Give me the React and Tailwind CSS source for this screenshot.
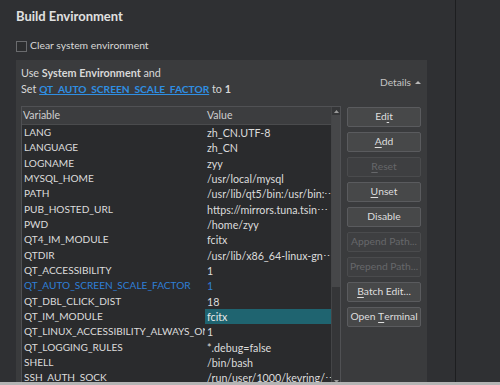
import React from "react";

const rows = [
  ["LANG", "zh_CN.UTF-8"],
  ["LANGUAGE", "zh_CN"],
  ["LOGNAME", "zyy"],
  ["MYSQL_HOME", "/usr/local/mysql"],
  ["PATH", "/usr/lib/qt5/bin:/usr/bin:\u22EF"],
  ["PUB_HOSTED_URL", "https://mirrors.tuna.tsin\u22EF"],
  ["PWD", "/home/zyy"],
  ["QT4_IM_MODULE", "fcitx"],
  ["QTDIR", "/usr/lib/x86_64-linux-gn\u22EF"],
  ["QT_ACCESSIBILITY", "1"],
  ["QT_AUTO_SCREEN_SCALE_FACTOR", "1", "changed"],
  ["QT_DBL_CLICK_DIST", "18"],
  ["QT_IM_MODULE", "fcitx", "selected"],
  ["QT_LINUX_ACCESSIBILITY_ALWAYS_ON", "1"],
  ["QT_LOGGING_RULES", "*.debug=false"],
  ["SHELL", "/bin/bash"],
  ["SSH_AUTH_SOCK", "/run/user/1000/keyring/\u22EF"],
];

const buttons = [
  { pre: "Ed", key: "i", post: "t" },
  { pre: "", key: "A", post: "dd" },
  { pre: "", key: "R", post: "eset", disabled: true },
  { pre: "", key: "U", post: "nset" },
  { pre: "Disable", key: "", post: "" },
  { pre: "Append Path...", key: "", post: "", disabled: true },
  { pre: "Prepend Path...", key: "", post: "", disabled: true },
  { pre: "", key: "B", post: "atch Edit..." },
  { pre: "Open ", key: "T", post: "erminal" },
];

const EnvButton = ({ pre, keyChar, post, disabled }) => (
  <div
    className={`flex h-[20px] items-center justify-center overflow-hidden whitespace-pre rounded-[2px] border text-[10.3px] ${
      disabled
        ? "border-[#4a4b4d] bg-[#3e3f41] text-[#66676a]"
        : "border-[#5a5b5e] bg-[#474849] text-[#dedede]"
    }`}
  >
    {pre}
    {keyChar && <span className="underline underline-offset-2">{keyChar}</span>}
    {post}
  </div>
);

const App = () => {
  return (
    <div
      className="flex h-[385px] w-[500px] flex-col overflow-hidden bg-[#2f3033] text-[#dcdcdc]"
      style={{ fontFamily: 'Lato, "Noto Sans", sans-serif' }}
    >
      <div className="flex h-[382px]">
        <div className="w-[455px] pl-4 pt-[6px]">
          <h1 className="h-[20px] text-[13px] font-bold leading-[20px] text-[#e0e0e0]">
            Build Environment
          </h1>
          <label className="mt-[13px] flex h-[14px] items-center gap-[3px] text-[10.4px] text-[#d8d8d8]">
            <span className="block h-[11px] w-[11px] border border-[#6a6b6e] bg-[#2c2d2f]" />
            Clear system environment
          </label>
          <div className="mt-[7px] h-[330px] w-[411px] bg-[#3a3b3d] pl-[5px] pr-[6px] pt-[5px]">
            <div className="flex items-end justify-between">
              <div className="text-[10.8px] leading-[16px] text-[#d8d8d8]">
                <div>
                  Use <span className="font-bold">System Environment</span> and
                </div>
                <div>
                  Set{" "}
                  <span className="text-[10.2px] font-bold text-[#2f8fe3] underline">
                    QT_AUTO_SCREEN_SCALE_FACTOR
                  </span>{" "}
                  to <span className="font-bold">1</span>
                </div>
              </div>
              <div className="mb-[7px] flex items-center gap-[4px] text-[10.2px] text-[#c4c4c4]">
                Details
                <svg width="6" height="4" viewBox="0 0 6 4">
                  <path d="M0 4 L3 1 L6 4 Z" fill="#b8b8b8" />
                </svg>
              </div>
            </div>
            <div className="mt-[9px] flex gap-[6px]">
              <div className="flex h-[280px] w-[320px] border border-[#505154]">
                <div className="flex flex-1 flex-col overflow-hidden">
                  <div className="flex h-[18px] shrink-0 items-center border-b border-[#4a4b4d] bg-[#3c3d3f] text-[10.5px] text-[#cfcfcf]">
                    <div className="w-[183px] pl-[1px]">Variable</div>
                    <div className="pl-[2px]">Value</div>
                  </div>
                  <div className="flex-1 bg-[#2a2b2d]">
                    {rows.map(([name, value, state]) => (
                      <div key={name} className="flex h-[15.33px] items-center leading-[15px]">
                        <div
                          className={`w-[183px] overflow-hidden whitespace-nowrap pl-[2px] text-[10.1px] ${
                            state === "changed" ? "text-[#2f7fd6]" : "text-[#dcdcdc]"
                          }`}
                        >
                          {name}
                        </div>
                        <div
                          className={`h-full flex-1 overflow-hidden whitespace-nowrap pl-[2px] text-[10.7px] ${
                            state === "changed"
                              ? "text-[#2f7fd6]"
                              : state === "selected"
                              ? "bg-[#1f6470] text-[#e8e8e8]"
                              : "text-[#dcdcdc]"
                          }`}
                        >
                          {value}
                        </div>
                      </div>
                    ))}
                  </div>
                </div>
                <div className="flex w-[9px] flex-col border-l border-[#444547] bg-[#353638]">
                  <div className="flex h-[8px] items-center justify-center">
                    <svg width="5" height="3" viewBox="0 0 5 3">
                      <path d="M0 3 L2.5 0 L5 3 Z" fill="#9a9a9a" />
                    </svg>
                  </div>
                  <div className="h-[172px] bg-[#464749]" />
                  <div className="flex-1" />
                  <div className="flex h-[8px] items-center justify-center">
                    <svg width="5" height="3" viewBox="0 0 5 3">
                      <path d="M0 0 L2.5 3 L5 0 Z" fill="#9a9a9a" />
                    </svg>
                  </div>
                </div>
              </div>
              <div className="flex w-[74px] flex-col gap-[5px] pt-[1px]">
                {buttons.map((b) => (
                  <EnvButton
                    key={b.pre + b.key + b.post}
                    pre={b.pre}
                    keyChar={b.key}
                    post={b.post}
                    disabled={b.disabled}
                  />
                ))}
              </div>
            </div>
          </div>
        </div>
        <div className="w-px bg-[#1d1e20]" />
        <div className="flex-1 bg-[#2f3033]" />
      </div>
      <div className="h-[3px] bg-[#b4b4b4]" />
    </div>
  );
};

export default App;
